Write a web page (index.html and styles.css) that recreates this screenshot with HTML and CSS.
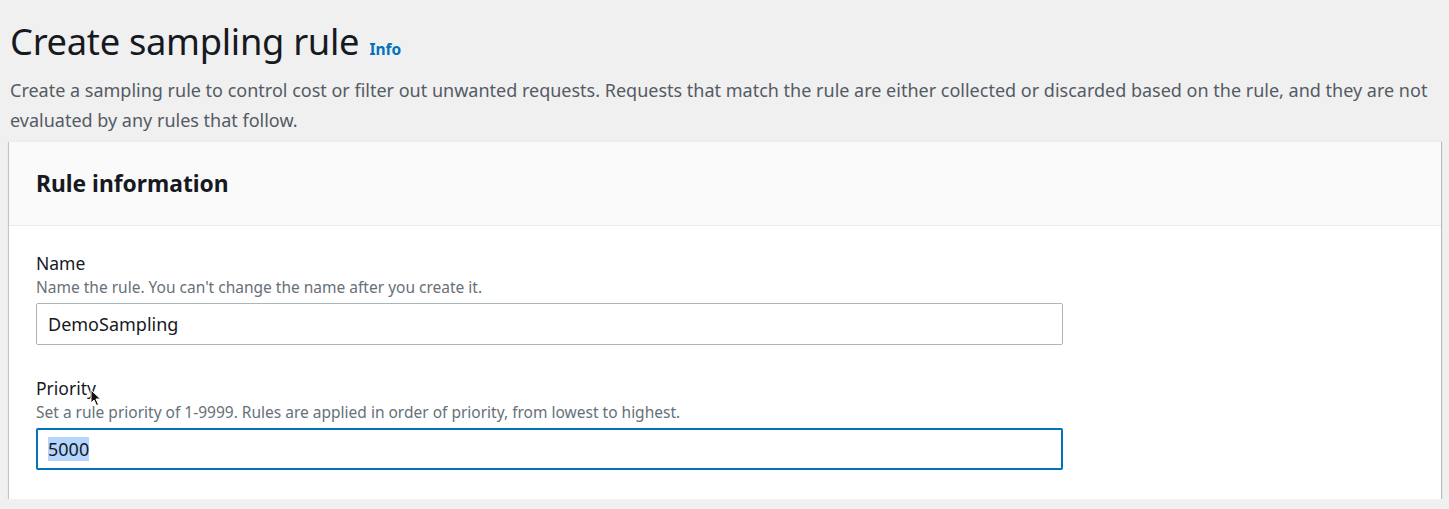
FILE: index.html
```html
<!DOCTYPE html>
<html>
<head>
<meta charset="utf-8">
<link rel="stylesheet" href="styles.css">
</head>
<body>
<div class="page">
  <header class="page-header">
    <h1 class="title">Create sampling rule <a class="info" href="#">Info</a></h1>
    <p class="desc">Create a sampling rule to control cost or filter out unwanted requests. Requests that match the rule are either collected or discarded based on the rule, and they are not evaluated by any rules that follow.</p>
  </header>
  <section class="card">
    <div class="card-header"><h2>Rule information</h2></div>
    <div class="card-body">
      <div class="field">
        <div class="label">Name</div>
        <div class="hint">Name the rule. You can't change the name after you create it.</div>
        <div class="input">DemoSampling</div>
      </div>
      <div class="field">
        <div class="label label-cursor">Priority<svg class="cursor" width="12" height="18" viewBox="0 0 12 18"><path d="M1 1 L1 14 L4 11 L6.5 16.5 L8.5 15.5 L6 10 L10.5 10 Z" fill="#111" stroke="#fff" stroke-width="1"/></svg></div>
        <div class="hint">Set a rule priority of 1-9999. Rules are applied in order of priority, from lowest to highest.</div>
        <div class="input focused"><span class="sel">5000</span></div>
      </div>
    </div>
  </section>
</div>
</body>
</html>
```
FILE: styles.css
```css
html, body {
  margin: 0;
  padding: 0;
  background: #f0f0f0;
}
body {
  font-family: "Noto Sans", "Open Sans", sans-serif;
  color: #16191f;
}
.page {
  padding: 16px 8px 0 9px;
}
.page-header {
  padding-left: 1px;
}
.title {
  margin: 0;
  font-size: 36.3px;
  font-weight: 400;
  line-height: 50px;
  letter-spacing: -0.3px;
}
.info {
  font-size: 15.5px;
  font-weight: 700;
  color: #0073bb;
  text-decoration: none;
  letter-spacing: 0;
  margin-left: 1px;
}
.desc {
  margin: 1px 0 6px;
  font-size: 18px;
  line-height: 30px;
  color: #545b64;
}
.card {
  background: #fff;
  box-shadow: 0 1px 1px 0 rgba(0,28,36,0.35), 1px 1px 1px 0 rgba(0,28,36,0.2), -1px 1px 1px 0 rgba(0,28,36,0.15);
  border-top: 1px solid #eaeded;
  width: 1432px;
}
.card-header {
  background: #fafafa;
  border-bottom: 1px solid #eaeded;
  height: 83px;
  display: flex;
  align-items: center;
  padding: 0 27px;
}
.card-header h2 {
  margin: 0;
  font-size: 22.8px;
  font-weight: 700;
  line-height: 30px;
}
.card-body {
  padding: 25px 27px 29px;
  display: flex;
  flex-direction: column;
  gap: 31px;
}
.field {
  display: flex;
  flex-direction: column;
}
.label {
  font-size: 17.5px;
  line-height: 24px;
  color: #16191f;
}
.label-cursor {
  position: relative;
}
.cursor {
  position: absolute;
  left: 54px;
  top: 13px;
}
.hint {
  font-size: 15.5px;
  line-height: 24px;
  color: #687078;
  margin-bottom: 4px;
}
.input {
  width: 1027px;
  height: 42px;
  box-sizing: border-box;
  border: 1px solid #aab7b8;
  border-radius: 2px;
  padding: 0 11px;
  font-size: 18px;
  display: flex;
  align-items: center;
  color: #16191f;
}
.input.focused {
  border: 2px solid #0073bb;
  padding: 0 10px;
}
.sel {
  background: #b4d5fe;
}
```
